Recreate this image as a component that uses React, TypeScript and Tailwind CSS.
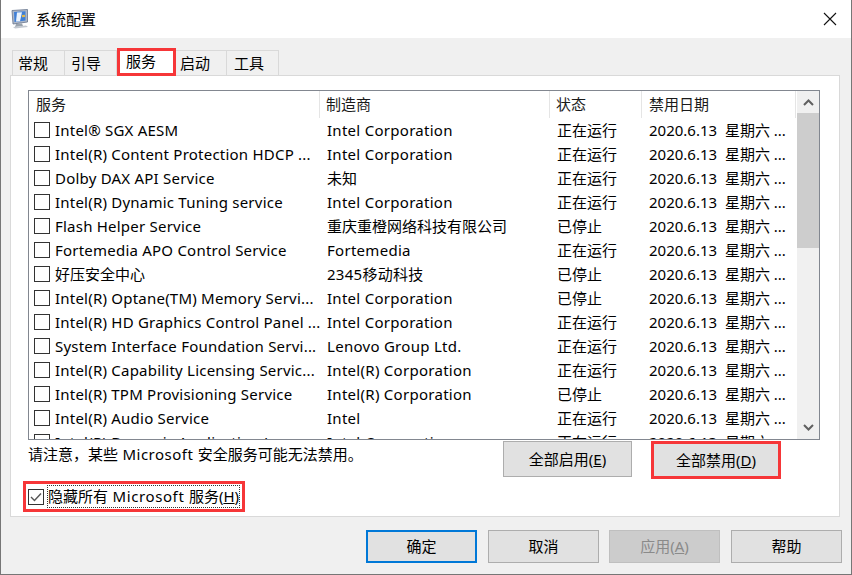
import React from "react";

const rows = [
  ["Intel® SGX AESM", "Intel Corporation", "正在运行"],
  ["Intel(R) Content Protection HDCP ...", "Intel Corporation", "正在运行"],
  ["Dolby DAX API Service", "未知", "正在运行"],
  ["Intel(R) Dynamic Tuning service", "Intel Corporation", "正在运行"],
  ["Flash Helper Service", "重庆重橙网络科技有限公司", "已停止"],
  ["Fortemedia APO Control Service", "Fortemedia", "正在运行"],
  ["好压安全中心", "2345移动科技", "已停止"],
  ["Intel(R) Optane(TM) Memory Servi...", "Intel Corporation", "已停止"],
  ["Intel(R) HD Graphics Control Panel ...", "Intel Corporation", "正在运行"],
  ["System Interface Foundation Servi...", "Lenovo Group Ltd.", "正在运行"],
  ["Intel(R) Capability Licensing Servic...", "Intel(R) Corporation", "正在运行"],
  ["Intel(R) TPM Provisioning Service", "Intel(R) Corporation", "已停止"],
  ["Intel(R) Audio Service", "Intel", "正在运行"],
  ["Intel(R) Dynamic Application Loa...", "Intel Corporation", "正在运行"],
];

// latin text runs a little wider in the reference, chinese does not
const isCjk = (s: string) => /^[\u4e00-\u9fff]/.test(s);

const Chevron = ({ up }: { up?: boolean }) => (
  <svg width="11" height="7" viewBox="0 0 11 7" className="text-[#606060]">
    <path d={up ? "M1 6 L5.5 1.5 L10 6" : "M1 1 L5.5 5.5 L10 1"} fill="none" stroke="currentColor" strokeWidth="2" />
  </svg>
);

const AppIcon = () => (
  <svg width="18" height="20" viewBox="0 0 18 20">
    <path d="M5 15 L11 14.5 L12 17 L4 18 Z" fill="#9aa3ad" />
    <path d="M2 18 L15 16.5 L17 18 L4 19.5 Z" fill="#c2c8d0" />
    <path d="M1 1.5 L16.5 0.5 L16.5 13 L2 15 Z" fill="#aeb8c8" stroke="#66748c" strokeWidth="0.8" />
    <path d="M3 3 L14.5 2.3 L14.5 11.6 L3.5 13 Z" fill="#3f7fd6" />
    <path d="M6 3.5 L11 3.2 L9 12.2 L5 12.6 Z" fill="#eaf3fd" />
    <path d="M11 6 L14 5.8 L14 8 L11 8.3 Z" fill="#e4b84a" />
  </svg>
);

const Btn = ({ children, cls = "" }: { children: React.ReactNode; cls?: string }) => (
  <button className={`h-[33px] w-[111px] text-[15px] flex items-center justify-center ${cls}`}>
    {children}
  </button>
);

const plain = "bg-[#e1e1e1] border border-[#adadad]";

export default function App() {
  return (
    <div className="w-[852px] h-[575px] flex flex-col bg-[#f0f0f0] border-x border-b border-[#767676] overflow-hidden text-[15px] text-black font-['Noto_Sans','Noto_Sans_CJK_SC',sans-serif]">
      <div className="h-[38px] shrink-0 bg-white flex items-center pl-[10px]">
        <AppIcon />
        <span className="ml-[7px] leading-none">系统配置</span>
        <svg width="14" height="14" viewBox="0 0 14 14" className="ml-auto mr-[14px]">
          <path d="M1 1 L13 13 M13 1 L1 13" stroke="#111" strokeWidth="1.1" fill="none" />
        </svg>
      </div>

      <div className="flex h-[38px] shrink-0 items-end pl-[11px]">
        <div className="h-[26px] w-[53px] pl-[5px] leading-[25px] border border-b-0 border-[#d9d9d9]">常规</div>
        <div className="h-[26px] w-[52px] pl-[6px] leading-[25px] border border-l-0 border-b-0 border-[#d9d9d9]">引导</div>
        <div className="relative z-10 h-[28px] w-[59px] bg-white border-[3px] border-[#f63638] pl-[6px] leading-[20px]">
          服务
        </div>
        <div className="h-[26px] w-[51px] leading-[25px] border border-l-0 border-b-0 border-[#d9d9d9] pl-[4px]">启动</div>
        <div className="h-[26px] w-[52px] leading-[25px] border border-l-0 border-b-0 border-[#d9d9d9] pl-[7px]">工具</div>
      </div>

      <div className="ml-[9px] w-[830px] h-[442px] shrink-0 -mt-px bg-white border border-[#d9d9d9] pt-[14px] pl-[17px]">
        <div className="w-[792px] h-[350px] border border-[#828790] flex overflow-hidden">
          <div className="w-[767px] shrink-0 flex flex-col">
            <div className="h-[27px] shrink-0 flex text-[#1a1a1a] leading-[27px]">
              <div className="w-[291px] pl-[7px] border-r border-[#e5e5e5]">服务</div>
              <div className="w-[230px] pl-[6px] border-r border-[#e5e5e5]">制造商</div>
              <div className="w-[92px] pl-[6px] border-r border-[#e5e5e5]">状态</div>
              <div className="w-[154px] pl-[7px] border-r border-[#e5e5e5]">禁用日期</div>
            </div>
            {rows.map(r => (
              <div key={r[0]} className="h-[24px] shrink-0 flex items-center whitespace-nowrap">
                <div className="w-[291px] pl-[5px] flex items-center">
                  <span className="w-[16px] h-[16px] border border-[#333] bg-white shrink-0" />
                  <span className={`ml-[5px] ${isCjk(r[0]) ? "" : "tracking-[0.22px]"}`}>{r[0]}</span>
                </div>
                <div className={`w-[230px] pl-[7px] ${isCjk(r[1]) ? "" : "tracking-[0.28px]"}`}>{r[1]}</div>
                <div className="w-[92px] pl-[7px]">{r[2]}</div>
                <div className="w-[154px] pl-[7px]">2020.6.13&nbsp; 星期六 ...</div>
              </div>
            ))}
          </div>
          <div className="w-[23px] shrink-0 bg-[#f0f0f0] flex flex-col ml-px">
            <div className="h-[22px] flex items-center justify-center"><Chevron up /></div>
            <div className="h-[135px] bg-[#cdcdcd]" />
            <div className="flex-1" />
            <div className="h-[23px] flex items-center justify-center"><Chevron /></div>
          </div>
        </div>

        <div className="flex w-[792px]">
          <div className="w-[475px] pt-[2px] leading-[24px] whitespace-nowrap">
            请注意，某些<span className="tracking-[0.5px]"> Microsoft </span>安全服务可能无法禁用。
          </div>
          <button className="mt-px h-[36px] w-[129px] bg-[#e1e1e1] border border-[#adadad] flex items-center justify-center">
            全部启用(<span className="underline">E</span>)
          </button>
          <div className="ml-[19px] mt-px h-[38px] w-[130px] border-[3px] border-[#f63638] bg-[#e1e1e1] flex items-center justify-center">
            全部禁用(<span className="underline">D</span>)
          </div>
        </div>

        <div className="-ml-[5px] mt-[2px] w-[222px] h-[31px] border-[3px] border-[#f63638] flex items-center pl-[2px]">
          <span className="w-[16px] h-[16px] border border-[#333] flex items-center justify-center shrink-0">
            <svg width="12" height="10" viewBox="0 0 12 10">
              <path d="M1 5 L4.5 8.5 L11 1.5" fill="none" stroke="#555" strokeWidth="1.4" />
            </svg>
          </span>
          <span className="ml-[3px] h-[23px] leading-[21px] border border-dotted border-[#333] whitespace-nowrap">
            隐藏所有<span className="tracking-[0.6px]"> Microsoft </span>服务(<span className="underline">H</span>)
          </span>
        </div>
      </div>

      <div className="flex mt-[13px] pl-[365px]">
        <Btn cls="bg-[#e1e1e1] border-2 border-[#0078d7]">确定</Btn>
        <Btn cls={`ml-[11px] ${plain}`}>取消</Btn>
        <Btn cls="ml-[10px] bg-[#cccccc] border border-[#bfbfbf] text-[#8a8a8a]">
          应用(<span className="underline">A</span>)
        </Btn>
        <Btn cls={`ml-[11px] ${plain}`}>帮助</Btn>
      </div>
    </div>
  );
}
